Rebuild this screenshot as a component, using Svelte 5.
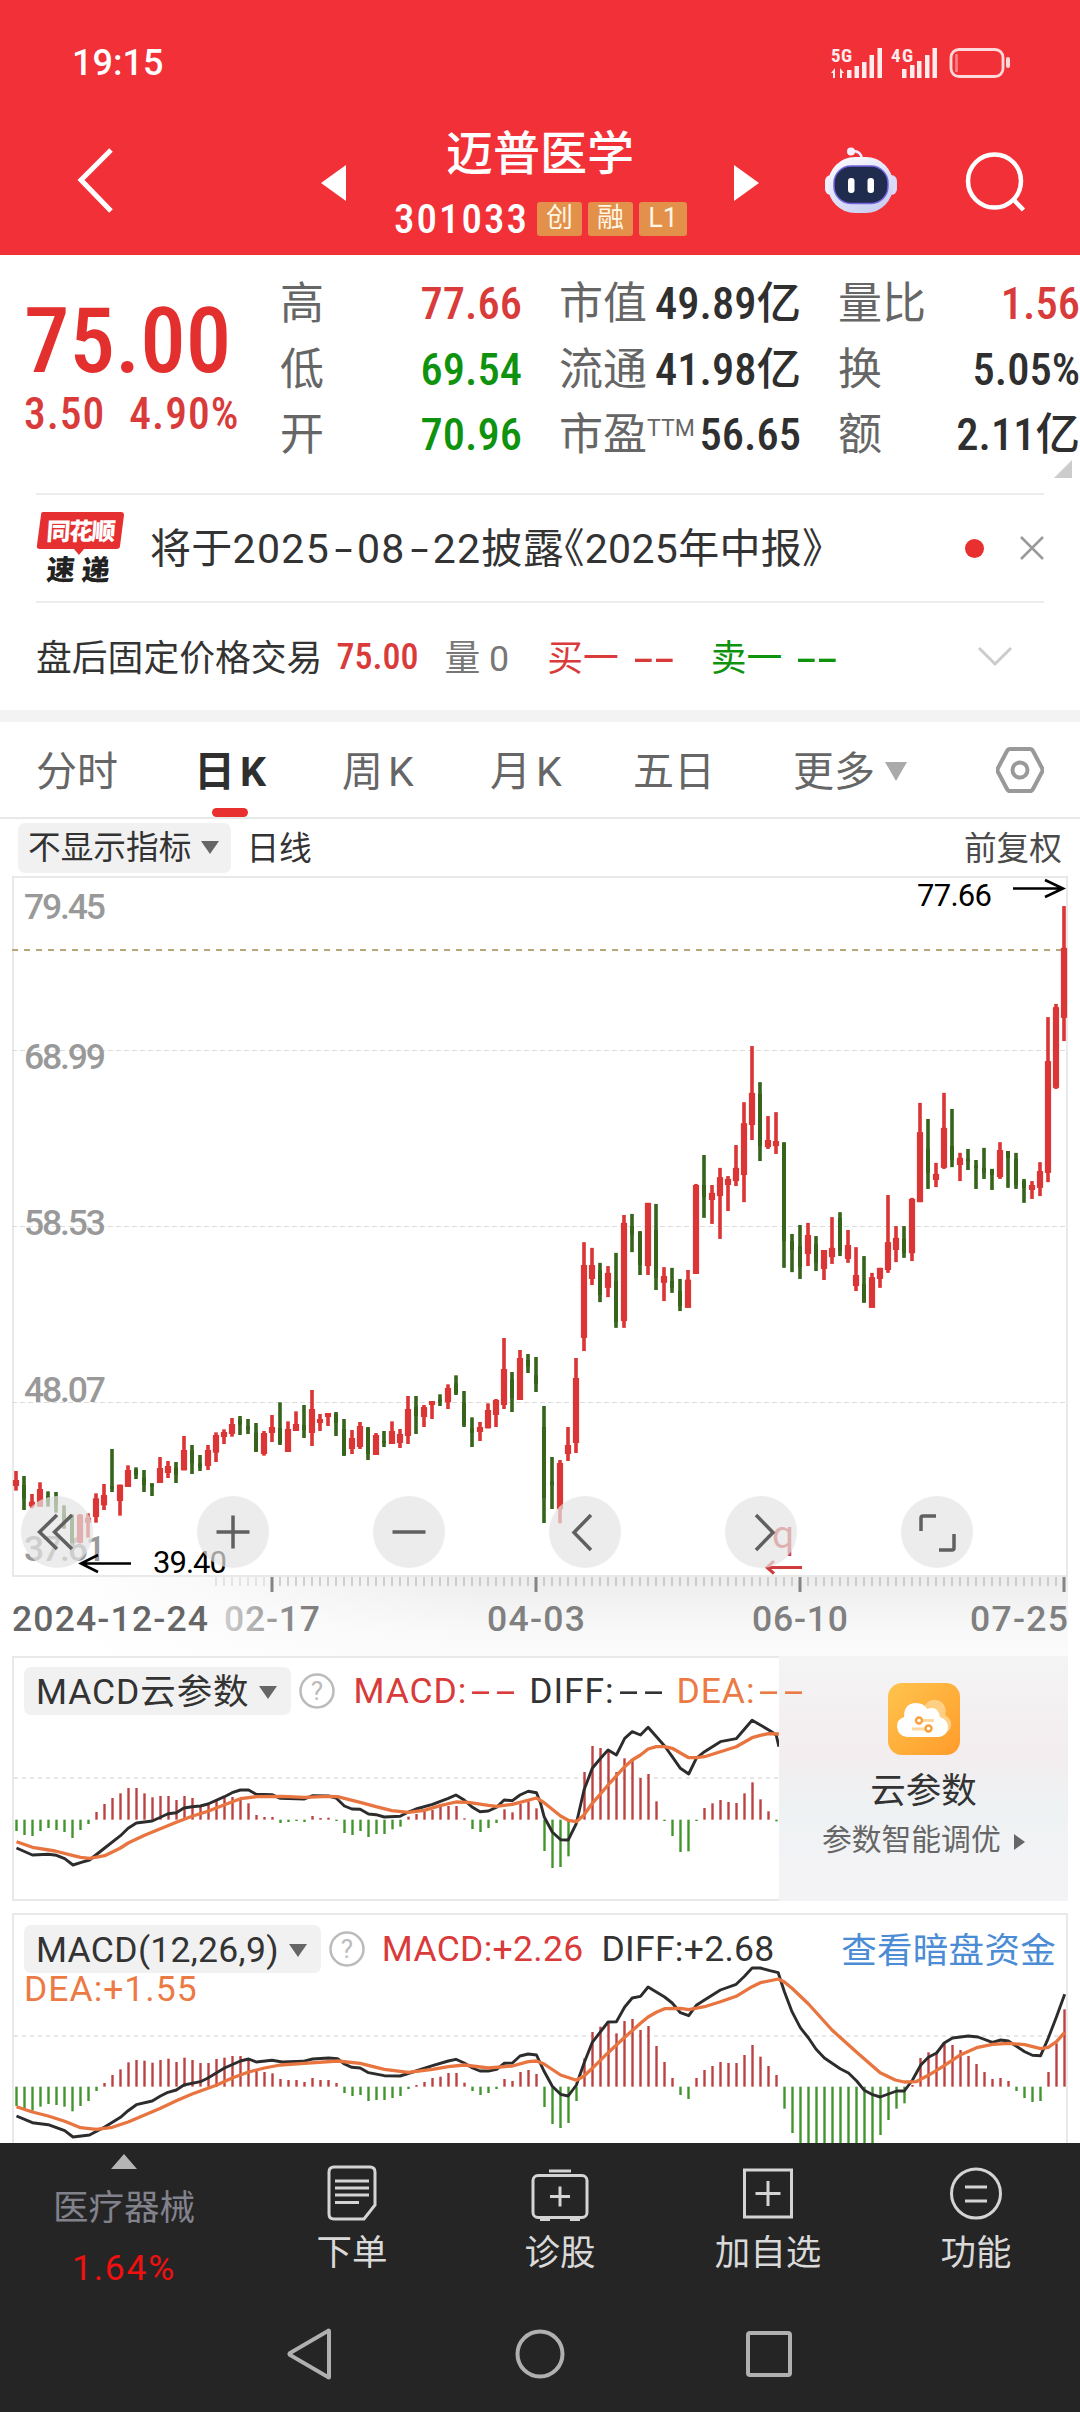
<script>

// ---- quote summary ---- ---- ---- ----
const stats = [
  { label: "高", value: "77.66", tone: "red" },
  { label: "市值", value: "49.89亿", tone: "dark" },
  { label: "量比", value: "1.56", tone: "red" },
  { label: "低", value: "69.54", tone: "green" },
  { label: "流通", value: "41.98亿", tone: "dark" },
  { label: "换", value: "5.05%", tone: "dark" },
  { label: "开", value: "70.96", tone: "green" },
  { label: "市盈", sup: "TTM", value: "56.65", tone: "dark" },
  { label: "额", value: "2.11亿", tone: "dark" }
]

const tabs = ["分时", "日K", "周K", "月K", "五日"]
let active_tab = $state("日K")

const tools = ["first", "plus", "minus", "prev", "next", "expand"]

// ---- candles: colour, high, body top, body bottom, low ----
const spring = `r663,690,708,722 g678,705,745,780 r732,755,769,775 r697,717,770,770 g724,738,755,770 g726,745,765,788
g766,790,815,836 g793,795,878,880 r792,795,878,880 r790,803,818,863 r730,745,801,818 r702,735,766,780
g597,708,717,726 r704,704,753,797 r646,660,711,711 g652,658,675,687 g660,683,705,726 g700,700,710,738
r621,654,699,699 r633,648,669,684 g636,652,674,699 r558,600,661,661 g585,602,640,672 g615,640,652,663
r585,600,648,660 r547,555,608,636 r538,546,561,582 r504,522,552,560 g498,508,524,555 g507,528,540,552
g519,548,604,606 r543,549,612,617 r495,531,549,576 g457,534,580,585 r514,537,606,606 r484,522,543,543
g465,525,540,564 r420,477,549,588 r492,507,519,543 r489,489,501,528 g486,492,518,558 g507,537,615,618
r540,564,597,612 r516,528,591,597 g531,534,612,630 r549,555,615,615 g543,573,579,591 r514,543,582,582
r537,552,579,594 r438,477,558,582 g438,470,498,552 r465,471,501,531 r453,453,465,507 g433,448,454,468
r403,414,457,477 g376,400,430,435 g423,457,525,531 g502,535,549,591 r516,531,546,573 r460,480,535,535
r447,450,495,531 r264,357,465,477 g366,388,445,486 r300,324,450,450 g312,330,350,369 g321,376,402,426
g468,531,744,819 g621,694,705,777 r630,639,778,820 r531,585,612,633 r324,384,579,609`

const summer = `r1098,1162,1366,1403 r1114,1162,1201,1218 g1156,1177,1246,1266 r1165,1184,1226,1252 g1128,1207,1322,1338
r1022,1044,1319,1338 g1019,1053,1077,1126 g1067,1069,1162,1190 r988,988,1165,1190 g991,1064,1198,1232
r1168,1193,1212,1263 g1170,1207,1226,1240 g1201,1235,1277,1291 r1176,1203,1282,1282 r935,938,1187,1187
g854,938,972,1030 r938,960,980,1047 r890,916,969,1089 r913,921,938,1011 r826,890,927,941 r706,765,910,986
r549,680,770,812 g650,683,829,871 r745,812,832,837 r734,815,829,851 g818,820,1095,1170 g1075,1095,1120,1182
g1050,1109,1168,1201 r1044,1078,1131,1165 g1081,1103,1156,1179 r1120,1120,1173,1204 r1028,1114,1140,1159
g1014,1030,1123,1137 r1064,1106,1145,1156 r1112,1190,1221,1235 g1137,1215,1266,1268 r1184,1196,1282,1282
r1170,1170,1201,1226 r966,1098,1176,1184 r1053,1086,1120,1154 g1053,1089,1129,1142 r974,977,1129,1151
r708,790,986,986 g753,837,904,949 r876,907,924,944 r680,778,890,893 g725,829,868,888 r848,862,882,927
g837,865,871,896 g868,884,890,949 g834,890,904,921 g893,893,910,952 r818,840,916,921 g843,843,862,946
g848,865,938,949 g921,927,946,988 r927,938,952,977 r874,899,946,969 r468,591,904,930 r431,440,666,669
r157,274,470,535`

function parse_candles(text, top, unit) {
  return text.split(/\s+/).map((item) => {
    let [high, open, close, low] = item.slice(1).split(",").map((n) => top + n / unit)
    return { up: item[0] === "r", high, open, close, low }
  })
}

const candles = [...parse_candles(spring, 374, 3), ...parse_candles(summer, -26, 2.8)]

const ticks = Array.from({ length: 107 }, (_, n) => n + 25)
const major_ticks = [32, 65, 98, 131]

// ---- MACD panels ---- ---- ---- ----
const cloud = {
  zero: 539,
  bars: [573,585,588,573,564,570,576,594,570,552,516,492,474,460,444,444,460,472,468,468,480,468,474,498,495,480,474,471,474,490,525,531,531,549,546,543,546,528,534,533,543,579,585,573,591,582,582,568,560,530,522,513,510,500,498,498,535,567,576,564,549,508,517,492,484,505,633,684,681,649,543,396,318,324,332,396,355,362,414,402,484,543,588,636,634,543,504,490,480,486,489,460,427,478,514,544],
  diff: "24,624 47,645 70,643 82,646 94,656 106,675 118,667 130,660 152,624 175,587 186,565 198,549 221,543 233,532 244,521 256,518 267,504 279,500 291,498 302,492 326,470 337,458 349,450 361,450 372,463 395,464 407,475 442,477 454,467 477,468 488,474 500,498 511,507 523,508 535,522 546,524 558,531 581,529 593,516 604,507 628,493 651,475 662,465 674,480 686,502 697,515 709,513 721,502 732,480 744,482 755,465 767,454 779,458 785,490 790,530 802,576 814,599 825,600 837,550 848,450 860,385 872,355 883,330 895,345 907,295 918,275 930,285 941,262 965,318 976,350 988,385 1000,402 1011,355 1023,335 1046,305 1069,296 1092,241 1104,255 1118,272 1127,285 1131,320",
  dea: "24,605 47,622 80,633 105,646 117,652 130,655 152,647 175,624 186,609 210,586 232,567 256,547 279,529 302,514 326,494 349,476 372,470 410,469 442,472 477,469 490,470 523,487 546,500 569,512 593,517 616,511 639,497 662,486 680,487 709,496 721,499 744,493 779,474 790,488 814,528 825,541 837,545 848,525 860,490 883,435 907,380 918,360 930,345 941,327 953,320 965,320 976,325 1000,353 1011,353 1023,350 1069,320 1092,293 1104,286 1116,281 1131,282"
}

const macd = {
  zero: 560,
  bars: [618,625,632,620,612,615,620,634,618,603,573,549,525,508,487,480,482,488,480,476,486,473,480,489,489,477,473,468,468,480,510,516,520,537,540,540,546,534,540,540,549,579,588,585,603,600,600,594,588,567,555,546,534,530,519,519,548,573,585,579,567,537,543,516,510,522,621,672,684,669,603,475,396,380,370,400,363,357,390,378,438,486,534,585,597,534,510,498,486,489,489,465,435,470,498,525,626,699,760,760,760,760,760,760,760,760,760,760,705,660,626,610,555,474,457,460,432,435,450,468,492,516,537,534,543,573,594,606,603,516,430,328],
  diff: "24,648 47,668 70,674 94,692 106,711 130,705 152,681 175,652 186,632 198,614 221,603 233,588 244,577 256,570 267,555 291,545 302,534 326,504 349,483 361,477 372,486 395,481 410,486 440,484 454,477 477,474 490,476 500,492 511,502 523,504 535,518 558,527 581,528 604,513 628,497 651,483 662,478 674,489 686,504 697,513 709,513 721,508 732,490 744,489 755,468 767,462 779,465 790,514 802,559 814,583 825,588 837,555 848,490 860,427 883,366 895,365 907,321 918,294 930,289 941,261 965,291 976,309 988,338 1000,347 1011,316 1023,300 1046,270 1069,253 1081,229 1092,204 1104,204 1118,212 1130,218 1139,275 1150,335 1162,383 1174,414 1185,448 1197,474 1220,506 1232,519 1244,543 1255,571 1267,584 1278,591 1290,582 1302,573 1313,573 1325,540 1337,495 1348,472 1360,459 1371,429 1383,414 1406,408 1420,411 1441,427 1453,420 1464,423 1488,455 1499,466 1511,467 1522,415 1534,350 1546,283",
  dea: "24,620 47,636 70,648 94,664 117,683 140,688 163,682 186,666 210,645 233,625 256,602 279,582 302,565 314,556 337,534 361,516 384,504 407,495 442,490 490,483 523,490 558,508 593,517 628,508 651,500 674,495 709,504 744,498 767,485 779,483 790,492 814,525 837,541 848,528 860,505 883,458 907,412 930,370 941,351 953,337 965,326 988,325 1000,329 1023,320 1046,305 1069,289 1092,260 1104,248 1130,237 1139,246 1150,265 1174,312 1208,390 1244,457 1278,518 1300,540 1313,546 1330,545 1348,526 1371,497 1395,464 1418,443 1441,433 1464,430 1488,434 1511,446 1522,442 1534,425 1546,397"
}

// series points are kept on a finer grid than the panel pixels
function line(points, top) {
  return points.split(" ").map((p) => {
    let [x, y] = p.split(",")
    return `${(x / 1.452).toFixed(1)},${(y / 3 + top).toFixed(1)}`
  }).join(" ")
}

</script>

{#snippet plot(series, top)}
  {#each series.bars as bar, n}
    <line class={bar < series.zero ? "bar_up" : "bar_down"} x1={16.5 + n * 8} x2={16.5 + n * 8} y1={series.zero / 3 + top} y2={bar / 3 + top} />
  {/each}
  <polyline class="diff" points={line(series.diff, top)} />
  <polyline class="dea" points={line(series.dea, top)} />
{/snippet}

{#snippet help()}
  <svg class="help" width="36" height="36" viewBox="0 0 36 36">
    <circle cx="18" cy="18" r="16.5" fill="none" stroke="#bbb" stroke-width="2.5" />
    <text x="18" y="27" text-anchor="middle">?</text>
  </svg>
{/snippet}

<div class="page">
  <header>
    <div class="status">
      <span class="clock">19:15</span>
      <svg width="186" height="50" viewBox="826 38 186 50" fill="#ffecec">
        <text class="net" x="831" y="62" textLength="21">5G</text>
        <text class="net" x="891" y="62" textLength="22">4G</text>
        <path d="M831 73l4-5v10h-2v-5zM844 73l-4-5v10h2v-5z" />
        <path d="M847 70h4.500v8h-4.500zM854.500 66h4.500v12h-4.500zM862 62h4.500v16h-4.500zM869.500 55h4.500v23h-4.500zM877.500 48h4.500v30h-4.500z" />
        <path d="M902 69h4.500v9h-4.500zM910 65h4.500v13h-4.500zM917 61h4.500v17h-4.500zM925 55h4.500v23h-4.500zM932.500 48h4.500v30h-4.500z" />
        <rect x="951" y="49.500" width="52" height="27" rx="8" fill="none" stroke="#ffd9d9" stroke-width="2.800" />
        <path d="M956.500 54v18" stroke="#f98488" stroke-width="2.500" />
        <rect x="1006" y="57" width="4" height="11" rx="2" fill="#ffd9d9" />
      </svg>
    </div>
    <div class="title_bar">
      <svg class="back" width="40" height="70" viewBox="0 0 40 70"><path d="M36 4L6 34L36 65" fill="none" stroke="#fff" stroke-width="5" /></svg>
      <svg class="arrow" width="25" height="36" viewBox="0 0 25 36"><path d="M25 0v36L0 18z" fill="#fff" /></svg>
      <div class="stock">
        <h1>迈普医学</h1>
        <div class="code">
          <span class="num">301033</span>
          <i>创</i><i>融</i><i class="wide">L1</i>
        </div>
      </div>
      <svg class="arrow" width="25" height="36" viewBox="0 0 25 36"><path d="M0 0v36l25-18z" fill="#fff" /></svg>
      <svg class="robot" width="72" height="68" viewBox="0 0 72 68">
        <defs>
          <linearGradient id="head" x1="0" y1="0" x2="0.6" y2="1">
            <stop offset="0" stop-color="#fff" />
            <stop offset="1" stop-color="#cbd0f2" />
          </linearGradient>
        </defs>
        <path d="M26 4q10-1 11 8" fill="none" stroke="#f0eaff" stroke-width="2.500" />
        <circle cx="26" cy="4.500" r="4" fill="#f4f0ff" />
        <rect x="0" y="28" width="12" height="20" rx="6" fill="#f0efff" />
        <rect x="60" y="28" width="12" height="20" rx="6" fill="#dcd8fa" />
        <rect x="3" y="10" width="65" height="56" rx="27" fill="url(#head)" />
        <rect x="9" y="19" width="54" height="37.500" rx="17" fill="#1f2c4d" stroke="#7466e0" stroke-width="1.500" />
        <rect x="23" y="31" width="6.500" height="15" rx="3" fill="#fff" />
        <rect x="42.500" y="31" width="6.500" height="15" rx="3" fill="#fff" />
      </svg>
      <svg class="search" width="62" height="62" viewBox="0 0 62 62" fill="none" stroke="#fff" stroke-width="4.500"><circle cx="29.500" cy="29" r="26.500" /><path d="M48 47l10.500 11" /></svg>
    </div>
  </header>

  <section class="quote">
    <div class="price">
      <strong>75.00</strong>
      <div><span>3.50</span><span>4.90%</span></div>
    </div>
    <div class="stats">
      {#each stats as stat}
        <div class="stat">
          <span class="label">{stat.label}{#if stat.sup}<sup>{stat.sup}</sup>{/if}</span>
          <b class={stat.tone}>{stat.value}</b>
        </div>
      {/each}
    </div>
    <span class="corner"></span>
  </section>

  <section class="news">
    <svg width="90" height="82" viewBox="0 -4 90 82">
      <path d="M7 1h78q3 0 3 3l-4 31q0 3-4 3H48l-5 6l-5-6H4q-4 0-3-4L5 4q0-3 2-3z" fill="#e62f30" />
      <text class="brand" x="12" y="29" textLength="69" transform="skewX(-4)">同花顺</text>
      <text class="brand black" x="16" y="69" textLength="63" transform="skewX(-5)">速递</text>
    </svg>
    <span class="headline">将于<span class="day">2025<u>-</u>08<u>-</u>22</span>披露《2025年中报》</span>
    <span class="dot"></span>
    <svg width="24" height="24" viewBox="0 0 24 24"><path d="M1 1l22 22M23 1L1 23" stroke="#999" stroke-width="2.500" /></svg>
  </section>

  <section class="after">
    <span>盘后固定价格交易</span>
    <span class="red fixed">75.00</span>
    <span class="grey vol">量 0</span>
    <span class="red bid">买一 <b><u>-</u><u>-</u></b></span>
    <span class="green ask">卖一 <b><u>-</u><u>-</u></b></span>
    <svg width="36" height="22" viewBox="0 0 36 22"><path d="M2 2l16 16L34 2" fill="none" stroke="#ccc" stroke-width="3" /></svg>
  </section>

  <nav class="tabs">
    {#each tabs as tab}
      <button class:latin={tab.endsWith("K")} class:active={tab === active_tab} onclick={() => active_tab = tab}>{tab}</button>
    {/each}
    <button class="more">更多<span class="down"></span></button>
    <svg width="48" height="46" viewBox="0 0 48 46" fill="none" stroke="#999" stroke-width="4"><path d="M14 2h20q2 0 3 2l9 17q1 2 0 4l-9 17q-1 2-3 2H14q-2 0-3-2L2 25q-1-2 0-4L11 4q1-2 3-2z" /><circle cx="24" cy="23" r="7.500" /></svg>
  </nav>

  <div class="indicator">
    <span class="pill">不显示指标<span class="down"></span></span>
    <span class="period">日线</span>
    <span class="adjust">前复权</span>
  </div>

  <div class="chart">
    <svg width="1080" height="782" viewBox="0 0 1080 782">
      <defs>
        <linearGradient id="axis_x">
          <stop offset="0.05" stop-color="#fff" />
          <stop offset="0.45" stop-color="#fff" stop-opacity="0" />
        </linearGradient>
        <linearGradient id="axis_y" x1="0" y1="0" x2="0" y2="1">
          <stop offset="0" stop-color="#ededed" />
          <stop offset="0.65" stop-color="#f8f8f8" />
          <stop offset="1" stop-color="#fbfbfb" />
        </linearGradient>
        <linearGradient id="fade" gradientUnits="userSpaceOnUse" x1="200" y1="0" x2="300" y2="0">
          <stop offset="0" stop-color="#888" stop-opacity="0.2" />
          <stop offset="1" stop-color="#808080" />
        </linearGradient>
      </defs>
      <rect x="12" y="701" width="1056" height="80" fill="url(#axis_y)" />
      <rect x="12" y="701" width="1056" height="80" fill="url(#axis_x)" />
      <rect x="13" y="1" width="1054" height="699" fill="#fff" stroke="#e9e9e9" stroke-width="2" />
      <path d="M12 174.500H1066M12 350.500H1066M12 526.500H1066" stroke="#dcdcdc" stroke-width="1" stroke-dasharray="5 3" />
      <path d="M12 74H1066" stroke="#b9a77c" stroke-width="2" stroke-dasharray="6 6" />
      <g class="scale">
        <text x="24" y="43" textLength="82">79.45</text>
        <text x="24" y="193" textLength="82">68.99</text>
        <text x="24" y="359" textLength="82">58.53</text>
        <text x="24" y="526" textLength="82">48.07</text>
        <text x="24" y="685" textLength="82">37.61</text>
      </g>
      {#each candles as candle, n}
        <g class={candle.up ? "up" : "fall"}>
          <rect x={14.2 + n * 8} y={candle.high} width="3.600" height={candle.low - candle.high} />
          <rect x={(candle.up ? 12.9 : 14) + n * 8} y={candle.open} width={candle.up ? 6.2 : 4} height={candle.close - candle.open} />
        </g>
      {/each}
      <text class="mark" x="917" y="30" textLength="75">77.66</text>
      <text class="mark" x="153" y="697" textLength="74">39.40</text>
      <path d="M1013 12.500h50M1045 4l18 8.500l-18 8.500M131 687.500H81M98 679l-17 8.500l17 8.500" fill="none" stroke="#000" stroke-width="2.600" />
      <text class="ex" x="772" y="672">q</text>
      <path d="M802 691.500H767M774 685l-7 6.500l7 6" fill="none" stroke="#d03b3b" stroke-width="3" />
      {#each ticks as n}
        <rect x={15.5 + n * 8} y="701" width="1" height="9" fill={n < 32 ? "#d0d0d0" : "#aaa"} />
      {/each}
      {#each major_ticks as n}
        <rect x={14.5 + n * 8} y="701" width="3" height="15" fill="#858585" />
      {/each}
      <g class="dates">
        {#snippet date(text, x, width, fill)}
          <text {x} y="755" textLength={width} {fill}>{text}</text>
        {/snippet}
        {@render date("2024-12-24", 12, 196, "#666")}
        {@render date("02-17", 224, 96, "url(#fade)")}
        {@render date("04-03", 487, 98, "#808080")}
        {@render date("06-10", 752, 96, "#808080")}
        {@render date("07-25", 970, 98, "#808080")}
      </g>
    </svg>
    <div class="tools">
      {#each tools as tool}
        <button aria-label={tool}>
          <svg width="72" height="72" viewBox="0 0 72 72" fill="none" stroke="#606060" stroke-width="3.500">
            {#if tool === "first"}
              <path d="M36 19L18.500 36L36 53M51 19L33.500 36L51 53" />
            {:else if tool === "plus"}
              <path d="M36 19.500v33M19.500 36h33" />
            {:else if tool === "minus"}
              <path d="M19.500 36h33" />
            {:else if tool === "prev"}
              <path d="M42 19L25 36.500L42 54" />
            {:else if tool === "next"}
              <path d="M31 19l17 17.500L31 54" />
            {:else}
              <path d="M20 35V22q0-2 2-2h13M53 38v14q0 2-2 2H38" />
            {/if}
          </svg>
        </button>
      {/each}
    </div>
  </div>

  <section class="panel">
    <svg width="1080" height="246" viewBox="0 0 1080 246">
      <rect x="13" y="1" width="1054" height="243" fill="#fff" stroke="#e9e9e9" stroke-width="2" />
      <path d="M14 122H779" stroke="#e6e6e6" stroke-width="2" stroke-dasharray="4 4" />
      {@render plot(cloud, -16)}
    </svg>
    <aside>
      <svg width="72" height="72" viewBox="0 0 72 72">
        <defs>
          <linearGradient id="amber" x1="0" y1="0" x2="1" y2="1">
            <stop offset="0" stop-color="#ffc44d" />
            <stop offset="1" stop-color="#ff9b2b" />
          </linearGradient>
        </defs>
        <rect width="72" height="72" rx="14" fill="url(#amber)" />
        <path d="M36 24a11 11 0 0 1 21 8q7 4 6 11q-1 6-8 7H40z" fill="#ffd083" />
        <path d="M19 54q-9-1-10-10q0-8 7-10q0-14 12-14q8 0 11 6q11-4 13 8q8 3 8 10q0 8-9 10z" fill="#fff" />
        <path d="M29 37.500h17M24 46h15" stroke="#ffd9a0" stroke-width="3" />
        <circle cx="31" cy="37.500" r="3" fill="#fff" stroke="#f9a03a" stroke-width="2.400" />
        <circle cx="40.500" cy="45.500" r="3" fill="#fff" stroke="#f9a03a" stroke-width="2.400" />
      </svg>
      <p>云参数</p>
      <small>参数智能调优 <span class="right"></span></small>
    </aside>
    <div class="legend">
      <span class="pill">MACD云参数<span class="down"></span></span>
      {@render help()}
      <span class="red m1">MACD:<u>-</u><u>-</u></span>
      <span class="d1">DIFF:<u>-</u><u>-</u></span>
      <span class="orange e1">DEA:<u>-</u><u>-</u></span>
    </div>
  </section>

  <section class="panel second">
    <svg width="1080" height="230" viewBox="0 0 1080 230">
      <rect x="13" y="1" width="1054" height="260" fill="#fff" stroke="#e9e9e9" stroke-width="2" />
      <path d="M14 123H1066" stroke="#e6e6e6" stroke-width="2" stroke-dasharray="4 4" />
      {@render plot(macd, -13)}
    </svg>
    <div class="legend">
      <span class="pill">MACD(12,26,9)<span class="down"></span></span>
      {@render help()}
      <span class="red m2">MACD:+2.26</span>
      <span class="d2">DIFF:+2.68</span>
      <a href="#funds">查看暗盘资金</a>
      <span class="orange e2">DEA:+1.55</span>
    </div>
  </section>

  <footer>
    <div class="actions">
      <div class="sector">
        <span class="up_mark"></span>
        <span>医疗器械</span>
        <em>1.64%</em>
      </div>
      <div class="action">
        <svg width="60" height="60" viewBox="0 0 60 60"><path d="M12 4h36q5 0 5 5v33L42 56H12q-5 0-5-5V9q0-5 5-5z" /><path d="M13 18h34M13 25h34M13 32h34M13 39.500h24" /></svg>
        <span>下单</span>
      </div>
      <div class="action">
        <svg width="60" height="60" viewBox="0 0 60 60"><rect x="3" y="12.500" width="54" height="42" rx="5" /><path d="M19 8h22M30 23.500v20M20 33.500h20M10 56.500h10M40 56.500h10" /></svg>
        <span>诊股</span>
      </div>
      <div class="action">
        <svg width="60" height="60" viewBox="0 0 60 60"><path d="M6.500 7h47v47h-47zM30 18v25M17.500 30.500h25" /></svg>
        <span>加自选</span>
      </div>
      <div class="action">
        <svg width="60" height="60" viewBox="0 0 60 60"><circle cx="30" cy="30.500" r="24.500" /><path d="M19 24h22M19 38h22" /></svg>
        <span>功能</span>
      </div>
    </div>
    <div class="system">
      <svg width="56" height="56" viewBox="0 0 56 56"><path d="M46 5v46q0 1-1 0L7 29q-1-1 0-2L45 5q1-1 1 0z" /></svg>
      <svg width="56" height="56" viewBox="0 0 56 56"><circle cx="28" cy="28" r="22.500" /></svg>
      <svg width="56" height="56" viewBox="0 0 56 56"><rect x="7" y="7" width="42" height="42" rx="2" /></svg>
    </div>
  </footer>
</div>

<style>

  :global(body) {
    margin: 0;
    background: #fff;
  }

  .page {
    width: 1080px;
    height: 2412px;
    overflow: hidden;
    color: #333;
    font-family: Roboto, "Noto Sans CJK SC", sans-serif;
  }

  svg { display: block; flex: none; }

  button {
    padding: 0;
    border: 0;
    background: none;
    color: inherit;
    font: inherit;
  }

  /* wide dash */
  u {
    display: inline-block;
    width: 21px;
    text-align: center;
    text-decoration: none;
    letter-spacing: 0;
    transform: scaleX(1.8);
  }

  .red { color: #d93a3a; }
  .green { color: #0f930f; }
  .dark { color: #2f2f2f; }
  .grey { color: #777; }
  .orange { color: #ec7a45; }

  header {
    height: 255px;
    background: #f13038;
    color: #fff;
  }

  .status {
    display: flex;
    justify-content: space-between;
    align-items: center;
    height: 126px;
    padding: 0 68px 0 72px;
    box-sizing: border-box;
  }

  .clock { font-size: 36px; font-weight: 500; }

  .net { font-size: 19px; font-weight: 700; font-stretch: 75%; }

  .title_bar {
    display: flex;
    align-items: flex-start;
  }

  .back { margin: 20px 0 0 75px; }
  .arrow { margin: 39px 0 0 206px; }

  .stock {
    width: 300px;
    margin-left: 44px;
  }

  .stock + .arrow { margin-left: 44px; }

  h1 {
    margin: 0;
    font-size: 47px;
    line-height: 56px;
    font-weight: 500;
    text-align: center;
  }

  .code {
    display: flex;
    align-items: center;
    height: 34px;
    margin: 20px 0 0 4px;
  }

  .num {
    width: 143px;
    font-size: 41px;
    font-weight: 500;
    font-stretch: 75%;
    letter-spacing: 2px;
  }

  .code i {
    width: 45px;
    height: 34px;
    margin-right: 6px;
    border-radius: 3px;
    background: #e2904a;
    color: #fff6e6;
    font-size: 27px;
    font-style: normal;
    line-height: 33px;
    text-align: center;
  }

  .code .wide { width: 48px; margin-right: 0; }

  .robot { margin: 21px 0 0 66px; }
  .search { margin: 26px 0 0 68px; }

  .quote {
    position: relative;
    display: flex;
    height: 238px;
  }

  .price {
    width: 280px;
    color: #e3302f;
  }

  .price strong {
    display: block;
    height: 108px;
    margin: 32px 0 0 24px;
    font-size: 91px;
    font-weight: 500;
    line-height: 108px;
    font-stretch: 75%;
  }

  .price div {
    display: flex;
    gap: 24px;
    margin-top: -1px;
    padding-left: 24px;
    font-size: 43.500px;
    font-weight: 500;
    font-stretch: 75%;
    letter-spacing: 1px;
    line-height: 42px;
    color: #d93a3a;
  }

  .stats {
    display: grid;
    grid-template-columns: 242px 242px 242px;
    grid-template-rows: repeat(3, 65.500px);
    column-gap: 37px;
    padding-top: 17px;
  }

  .stat {
    display: flex;
    justify-content: space-between;
    align-items: baseline;
    white-space: nowrap;
  }

  .stat .label {
    color: #666;
    font-size: 44px;
    line-height: 65px;
  }

  sup {
    font-size: 23px;
    vertical-align: 14px;
    line-height: 0;
  }

  .stat b {
    font-size: 44.500px;
    font-weight: 500;
    font-stretch: 75%;
    line-height: 60px;
  }

  .corner {
    position: absolute;
    right: 8px;
    bottom: 15px;
    border-left: 18px solid transparent;
    border-bottom: 18px solid #ccc;
  }

  .news {
    display: flex;
    align-items: center;
    height: 106px;
    margin: 0 36px;
    border-top: 2px solid #ececec;
    border-bottom: 2px solid #ececec;
    box-sizing: content-box;
  }

  .brand {
    font-size: 24px;
    font-weight: 900;
    fill: #fff;
  }

  .black { fill: #222; font-size: 28px; }

  .headline {
    flex: 1;
    margin: -6px 0 0 24px;
    font-size: 41px;
    letter-spacing: 0.3px;
    white-space: nowrap;
    font-feature-settings: "halt";
  }

  .day { letter-spacing: 1.300px; }
  .day u { width: 27px; transform: scaleX(1.6); }

  .dot {
    width: 19px;
    height: 19px;
    margin-right: 36px;
    border-radius: 50%;
    background: #e8302f;
  }

  .after {
    display: flex;
    align-items: center;
    height: 107px;
    padding: 0 67px 0 36px;
    border-bottom: 12px solid #f3f3f3;
    font-size: 35.800px;
    white-space: nowrap;
  }

  .after span { margin-top: -4px; }
  .after svg { margin-left: auto; }
  .after b { font-weight: 500; margin-left: 5px; }
  .after .fixed { margin: 0 0 0 14px; font-size: 36px; font-weight: 500; font-stretch: 75%; }
  .after .vol { margin-left: 26px; }
  .after .bid { margin-left: 38px; }
  .after .ask { margin-left: 36px; }

  .tabs {
    display: grid;
    grid-template-columns: 157px 148px 148px 144px 157px auto 48px;
    align-items: center;
    justify-items: start;
    height: 97px;
    padding: 0 36px;
    border-bottom: 2px solid #e8e8e8;
    box-sizing: border-box;
    color: #666;
    font-size: 41px;
  }

  .tabs button {
    position: relative;
    height: 95px;
    padding-bottom: 3px;
    white-space: nowrap;
  }

  .tabs .latin {
    letter-spacing: 5px;
    margin-left: 1px;
  }

  .tabs .more { margin-left: 3px; }

  .tabs .active {
    color: #2f2f2f;
    font-weight: 700;
  }

  .tabs .active::after {
    content: "";
    position: absolute;
    left: 50%;
    bottom: 0;
    width: 36px;
    height: 9px;
    margin-left: -21px;
    border-radius: 5px;
    background: #e8302f;
  }

  .down {
    display: inline-block;
    margin-left: 10px;
    vertical-align: 5px;
    border: 9px solid transparent;
    border-top: 13px solid #666;
    border-bottom: 0;
  }

  .tabs .down {
    border-width: 19px 11px 0;
    border-top-color: #aaa;
  }

  .indicator {
    display: flex;
    align-items: center;
    height: 57px;
    padding: 0 18px;
    font-size: 32.700px;
  }

  .pill {
    height: 50px;
    margin-right: 15px;
    padding: 0 12px 0 10px;
    border-radius: 7px;
    background: #f1f1f1;
    line-height: 50px;
    white-space: nowrap;
  }

  .period, .adjust { margin-top: -4px; }
  .adjust { margin-left: auto; color: #4a4a4a; }

  .chart {
    position: relative;
    height: 780px;
  }

  .scale { fill: #999; font-size: 35.500px; font-weight: 500; }
  .mark { font-size: 31px; }
  .ex { fill: #d03b3b; font-size: 39px; }
  .dates { font-size: 35.500px; font-weight: 500; }

  .tools {
    position: absolute;
    left: 21px;
    top: 620px;
    display: flex;
    gap: 104px;
  }

  .tools button {
    width: 72px;
    height: 72px;
    border-radius: 50%;
    background: rgba(228, 228, 228, 0.7);
  }

  .up { fill: #dc3535; }
  .fall { fill: #36641b; }

  .bar_up { stroke: #bd4141; stroke-width: 2.4; }
  .bar_down { stroke: #43942f; stroke-width: 2.4; }

  .diff, .dea {
    fill: none;
    stroke: #2c2c2c;
    stroke-width: 2.900;
    stroke-linejoin: round;
  }

  .dea { stroke: #e8743f; stroke-width: 3.300; }

  .panel {
    position: relative;
    height: 257px;
    font-size: 35.500px;
    letter-spacing: 0.9px;
  }

  .second {
    height: 230px;
    overflow: hidden;
    letter-spacing: 0.3px;
  }

  .legend {
    position: absolute;
    left: 24px;
    top: 11px;
    right: 24px;
    display: flex;
    align-items: center;
    white-space: nowrap;
  }

  .legend .pill {
    height: 48px;
    margin-right: 8px;
    padding-left: 12px;
    padding-right: 14px;
    line-height: 50px;
  }

  .legend u { width: 25px; transform: translateX(1px) scaleX(2); }
  .help text { fill: #bbb; font-size: 26px; letter-spacing: 0; }
  .m1 { margin-left: 18px; }
  .d1, .e1 { margin-left: 12px; }
  .m2 { margin-left: 17px; }
  .d2 { margin-left: 18px; }
  .second .legend { flex-wrap: wrap; top: 12px; }
  .second a { margin: -4px 0 0 auto; color: #4b8cd5; text-decoration: none; }
  .e2 { width: 100%; line-height: 33px; letter-spacing: 1px; }

  aside {
    position: absolute;
    left: 779px;
    top: 0;
    display: flex;
    flex-direction: column;
    align-items: center;
    width: 289px;
    height: 245px;
    background: linear-gradient(#f4f4f5, #f3edef 40%, #eef2f3 62%, #f3f3f6 85%);
    letter-spacing: 0;
  }

  aside svg { margin-top: 27px; }
  aside p { margin: 10px 0 0; line-height: 53px; }
  aside small { font-size: 29.800px; line-height: 44px; color: #666; }

  .right {
    display: inline-block;
    margin-left: 6px;
    border: 8px solid transparent;
    border-left: 11px solid #666;
    border-right: 0;
  }

  footer {
    height: 269px;
    background: #252525;
    color: #d9d9d9;
    font-size: 35.500px;
    line-height: 50px;
  }

  footer svg { fill: none; stroke: #d4d4d4; stroke-width: 3; }

  .actions {
    display: grid;
    grid-template-columns: 248px 208px 208px 208px 208px;
    height: 183px;
  }

  .sector, .action {
    display: flex;
    flex-direction: column;
    align-items: center;
  }

  .sector {
    color: #82828c;
    padding-top: 11px;
  }

  .up_mark {
    margin-bottom: 14px;
    border: 13px solid transparent;
    border-top: 0;
    border-bottom: 15px solid #b5b5b5;
  }

  em {
    margin-top: 10px;
    color: #f01010;
    font-style: normal;
    letter-spacing: 1.800px;
  }

  .action { padding-top: 20px; }
  .action span { margin-top: 5px; }

  .system {
    display: flex;
    gap: 173px;
    padding-left: 283px;
  }

  .system svg { stroke: #b0b0b0; stroke-width: 4; }

</style>
